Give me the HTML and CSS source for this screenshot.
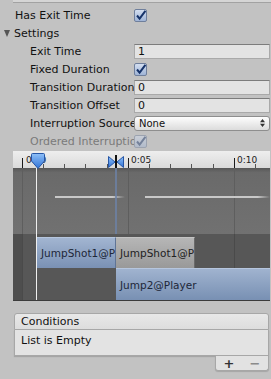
FILE: index.html
```html
<!DOCTYPE html>
<html lang="en">
<head>
    <meta charset="UTF-8">
    <title>Transition Inspector</title>
    <link rel="stylesheet" href="styles.css">
</head>
<body>
    <div class="panel-top"></div>

    <div class="rows">
        <div class="row">
            <span class="label">Has Exit Time</span>
            <span class="check"><svg width="11" height="11" viewBox="0 0 11 11"><path d="M2 5.5 L4.6 8.6 L10.4 0.8" fill="none" stroke="#16336a" stroke-width="2"/></svg></span>
        </div>
        <div class="row foldout">
            <span class="label"><i class="arrow"></i>Settings</span>
        </div>
        <div class="row sub">
            <span class="label">Exit Time</span>
            <span class="field">1</span>
        </div>
        <div class="row sub">
            <span class="label">Fixed Duration</span>
            <span class="check"><svg width="11" height="11" viewBox="0 0 11 11"><path d="M2 5.5 L4.6 8.6 L10.4 0.8" fill="none" stroke="#16336a" stroke-width="2"/></svg></span>
        </div>
        <div class="row sub">
            <span class="label">Transition Duration</span>
            <span class="field">0</span>
        </div>
        <div class="row sub">
            <span class="label">Transition Offset</span>
            <span class="field">0</span>
        </div>
        <div class="row sub">
            <span class="label">Interruption Source</span>
            <span class="select">None
                <svg width="5" height="8" viewBox="0 0 5 8"><path d="M0 3.2 L2.5 0 L5 3.2Z M0 4.8 L2.5 8 L5 4.8Z" fill="#333"/></svg>
            </span>
        </div>
        <div class="row sub disabled">
            <span class="label">Ordered Interruption</span>
            <span class="check"><svg width="11" height="11" viewBox="0 0 11 11"><path d="M2 5.5 L4.6 8.6 L10.4 0.8" fill="none" stroke="#16336a" stroke-width="2"/></svg></span>
        </div>
    </div>

    <!-- Transition timeline -->
    <div class="timeline">
        <svg class="ruler-graph" width="257" height="83" viewBox="0 0 257 83">
            <defs>
                <linearGradient id="rulerBg" x1="0" y1="0" x2="0" y2="1">
                    <stop offset="0" stop-color="#eeeeee"/>
                    <stop offset="1" stop-color="#dadada"/>
                </linearGradient>
                <linearGradient id="graphBg" x1="0" y1="0" x2="0" y2="1">
                    <stop offset="0" stop-color="#575757"/>
                    <stop offset="0.07" stop-color="#6a6a6a"/>
                    <stop offset="1" stop-color="#717171"/>
                </linearGradient>
                <linearGradient id="fadeA" x1="0" y1="0" x2="1" y2="0">
                    <stop offset="0" stop-color="#c8c8c8"/>
                    <stop offset="0.82" stop-color="#c8c8c8"/>
                    <stop offset="1" stop-color="#c8c8c8" stop-opacity="0"/>
                </linearGradient>
                <linearGradient id="fadeB" x1="0" y1="0" x2="1" y2="0">
                    <stop offset="0" stop-color="#c8c8c8"/>
                    <stop offset="0.9" stop-color="#c8c8c8"/>
                    <stop offset="1" stop-color="#c8c8c8" stop-opacity="0"/>
                </linearGradient>
                <linearGradient id="markBlue" x1="0" y1="0" x2="0" y2="1">
                    <stop offset="0" stop-color="#8fc0f8"/>
                    <stop offset="1" stop-color="#2f72d6"/>
                </linearGradient>
            </defs>

            <rect width="257" height="17" fill="url(#rulerBg)"/>
            <rect y="17" width="257" height="66" fill="url(#graphBg)"/>

            <path d="M9.5 17V83M115.5 17V83M221.5 17V83" stroke="#5e5e5e"/>
            <path d="M9.5 7V17M115.5 7V17M221.5 7V17" stroke="#1a1a1a"/>
            <path d="M30.5 13V17M51.5 13V17M72.5 13V17M94.5 13V17M136.5 13V17M157.5 13V17M178.5 13V17M200.5 13V17M242.5 13V17" stroke="#555"/>

            <text x="13" y="12" class="tick-label">0:00</text>
            <text x="118" y="12" class="tick-label">0:05</text>
            <text x="224" y="12" class="tick-label">0:10</text>

            <rect x="42" y="45" width="70" height="2" fill="url(#fadeA)"/>
            <rect x="132" y="45" width="125" height="2" fill="url(#fadeB)"/>

            <rect x="102" y="17" width="2" height="66" fill="#6d82a6" opacity="0.8"/>

            <path d="M18.5 3.5 Q18.5 2.5 19.5 2.5 H30.5 Q31.5 2.5 31.5 3.5 V10 L25 17.5 L18.5 10Z" fill="url(#markBlue)" stroke="#2656a6"/>
            <path d="M95.5 5.5 L102 11 L95.5 16.5Z M110.5 5.5 L104 11 L110.5 16.5Z" fill="url(#markBlue)" stroke="#2656a6"/>
            <rect x="102" y="4" width="2" height="13" fill="#111"/>
        </svg>

        <div class="clips">
            <div class="clip-row">
                <div class="clip src">JumpShot1@Player</div>
                <div class="clip ghost">JumpShot1@Player</div>
            </div>
            <div class="clip-row">
                <div class="clip dst">Jump2@Player</div>
            </div>
        </div>

        <div class="playhead"></div>
    </div>

    <!-- Conditions list -->
    <div class="conditions">
        <div class="cond-head">Conditions</div>
        <div class="cond-body">List is Empty</div>
        <div class="cond-foot"><span class="plus">+</span><span class="minus">−</span></div>
    </div>
</body>
</html>
```

FILE: styles.css
```css
/* General */
body {
    margin: 0;
    width: 271px;
    height: 379px;
    overflow: hidden;
    background: #c2c2c2;
    font-family: "DejaVu Sans", sans-serif;
    font-size: 11px;
    color: #111;
}

.panel-top {
    margin-left: 13px;
    height: 2px;
    background: #d5d5d5;
    border-bottom: 1px solid #a2a2a2;
}

/* Property rows */
.rows {
    padding-top: 3px;
}

.row {
    display: flex;
    align-items: center;
    height: 18px;
}

.label {
    flex: 0 0 134px;
    box-sizing: border-box;
    padding-left: 15px;
    overflow: hidden;
    white-space: nowrap;
}

.sub .label {
    padding-left: 30px;
}

.foldout .label {
    padding-left: 4px;
}

.arrow {
    display: inline-block;
    width: 0;
    height: 0;
    border-left: 3.5px solid transparent;
    border-right: 3.5px solid transparent;
    border-top: 7px solid #555;
    margin-right: 4px;
    vertical-align: 0;
}

.check {
    display: flex;
    align-items: center;
    justify-content: center;
    width: 13px;
    height: 13px;
    box-sizing: border-box;
    border: 1px solid #6f7f9c;
    border-radius: 2px;
    background: linear-gradient(#d3def0, #9fb4d6);
}

.field {
    width: 136px;
    height: 15px;
    box-sizing: border-box;
    background: #e3e3e3;
    border: 1px solid #a9a9a9;
    border-top-color: #7c7c7c;
    padding-left: 3px;
    line-height: 13px;
}

.select {
    display: flex;
    align-items: center;
    justify-content: space-between;
    width: 136px;
    height: 15px;
    box-sizing: border-box;
    padding: 0 4px 0 4px;
    border: 1px solid #8e8e8e;
    border-radius: 3px;
    background: linear-gradient(#fdfdfd, #dcdcdc);
    font-size: 10px;
}

.disabled .label {
    color: #7a7a7a;
}

.disabled .check {
    opacity: 0.45;
}

/* Timeline */
.timeline {
    position: relative;
    margin: 1px 1px 0 13px;
}

.ruler-graph {
    display: block;
}

.tick-label {
    font-family: "DejaVu Sans", sans-serif;
    font-size: 9px;
    fill: #222;
}

.clips {
    height: 67px;
    box-sizing: border-box;
    padding-top: 3px;
    border-bottom: 1px solid #3c3c3c;
    background:
        linear-gradient(to right, transparent 9px, #4a4a4a 9px, #4a4a4a 10px, transparent 10px),
        linear-gradient(to right, transparent 221px, #4a4a4a 221px, #4a4a4a 222px, transparent 222px),
        linear-gradient(to right, #4e4e4e 0, #4e4e4e 9px, #575757 9px);
}

.clip-row {
    display: flex;
    height: 31px;
}

.clip-row + .clip-row {
    height: 32px;
}

.clip {
    display: flex;
    align-items: center;
    box-sizing: border-box;
    padding-left: 4px;
    overflow: hidden;
    white-space: nowrap;
    font-size: 10.5px;
    color: #1d2738;
}

.src {
    margin-left: 24px;
    width: 79px;
    background: linear-gradient(#a2b5d1, #7a91b4);
    border-top: 1px solid #b6c6de;
    border-right: 1px solid #5f7496;
}

.ghost {
    width: 79px;
    background: linear-gradient(#b6b6b6, #999);
    border-top: 1px solid #c4c4c4;
    border-right: 1px solid #6a6a6a;
    color: #222;
}

.dst {
    margin-left: 103px;
    width: 154px;
    background: linear-gradient(#a0b3cf, #7890b3);
    border-top: 1px solid #b6c6de;
}

.playhead {
    position: absolute;
    left: 23px;
    top: 17px;
    bottom: 1px;
    width: 1px;
    background: #efefef;
}

/* Conditions */
.conditions {
    margin: 12px 0 0 14px;
    width: 255px;
}

.cond-head {
    height: 17px;
    box-sizing: border-box;
    padding-left: 6px;
    line-height: 15px;
    border: 1px solid #a7a7a7;
    border-radius: 3px 3px 0 0;
    background: linear-gradient(#e8e8e8, #dddddd);
}

.cond-body {
    height: 26px;
    box-sizing: border-box;
    padding: 3px 0 0 6px;
    line-height: 16px;
    border: 1px solid #a7a7a7;
    border-top: 0;
    background: #e3e3e3;
    box-shadow: 0 1px 1px rgba(0, 0, 0, 0.15);
}

.cond-foot {
    display: flex;
    justify-content: space-around;
    align-items: center;
    margin-left: 201px;
    width: 54px;
    height: 15px;
    box-sizing: border-box;
    border: 1px solid #a7a7a7;
    border-top: 0;
    border-radius: 0 0 3px 3px;
    background: #e2e2e2;
    box-shadow: 0 1px 1px rgba(0, 0, 0, 0.15);
    font-size: 13px;
    font-weight: bold;
    line-height: 13px;
}

.plus {
    color: #333;
}

.minus {
    color: #8a8a8a;
}
```
